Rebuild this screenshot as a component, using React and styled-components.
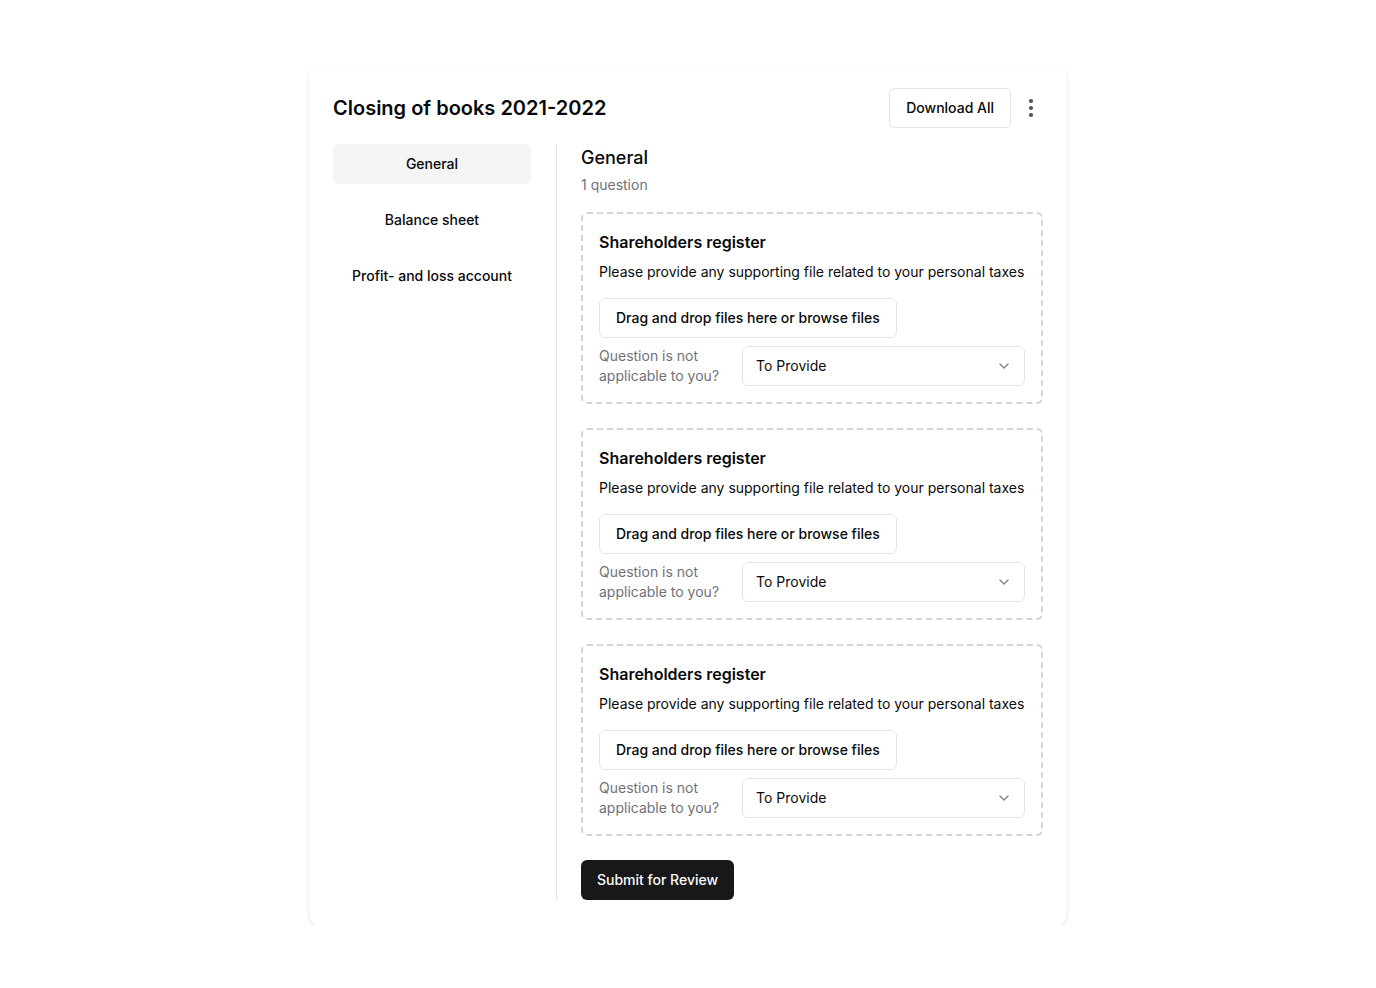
import React from "react";
import styled, { createGlobalStyle } from "styled-components";

const Global = createGlobalStyle`
  * { box-sizing: border-box; }
  html, body { margin: 0; padding: 0; background: #ffffff; }
  body { font-family: Inter, "Noto Sans", sans-serif; color: #09090b; -webkit-font-smoothing: antialiased; }
  button { font-family: inherit; }
`;

const Page = styled.div`
  display: flex;
  justify-content: center;
  padding-top: 67px;
`;

const Card = styled.div`
  width: 758px;
  background: #fff;
  border-radius: 8px;
  box-shadow: 0 1px 3px rgba(0,0,0,0.10), 0 1px 2px rgba(0,0,0,0.06);
  padding: 21px 24px 24px;
  display: flex;
  flex-direction: column;
  gap: 16px;
`;

const Header = styled.div`
  display: flex;
  align-items: center;
  justify-content: space-between;
  height: 40px;
`;

const Title = styled.h1`
  margin: 0;
  font-size: 20px;
  font-weight: 600;
  letter-spacing: 0;
  line-height: 28px;
`;

const Actions = styled.div`
  display: flex;
  align-items: center;
  gap: 8px;
`;

const OutlineButton = styled.button`
  height: 40px;
  padding: 0 16px 1px;
  background: #fff;
  border: 1px solid #e4e4e7;
  border-radius: 6px;
  font-size: 14px;
  font-weight: 500;
  color: #09090b;
  cursor: pointer;
  display: inline-flex;
  align-items: center;
  white-space: nowrap;
`;

const IconButton = styled.button`
  width: 24px;
  height: 40px;
  padding: 0;
  background: transparent;
  border: none;
  display: flex;
  align-items: center;
  justify-content: center;
  color: #52525b;
  cursor: pointer;
`;

const Body = styled.div`
  display: flex;
`;

const Sidebar = styled.nav`
  width: 224px;
  flex-shrink: 0;
  padding-right: 25px;
  border-right: 1px solid #e4e4e7;
  display: flex;
  flex-direction: column;
  gap: 16px;
`;

const Tab = styled.button`
  height: 40px;
  width: 100%;
  border: none;
  border-radius: 6px;
  padding: 0 0 1px;
  background: ${p => (p.$active ? "#f4f4f5" : "transparent")};
  font-size: 14px;
  font-weight: 500;
  color: #09090b;
  cursor: pointer;
`;

const Content = styled.div`
  flex: 1;
  padding-left: 24px;
  display: flex;
  flex-direction: column;
`;

const SectionTitle = styled.h2`
  margin: 0;
  font-size: 18px;
  font-weight: 500;
  line-height: 28px;
`;

const SectionSub = styled.p`
  margin: 3px 0 17px;
  font-size: 14px;
  line-height: 20px;
  color: #71717a;
`;

const Questions = styled.div`
  display: flex;
  flex-direction: column;
  gap: 24px;
`;

const QuestionBox = styled.div`
  border: 2px dashed #d4d4d8;
  border-radius: 6px;
  padding: 16px;
  display: flex;
  flex-direction: column;
`;

const QTitle = styled.h3`
  margin: 0;
  font-size: 16px;
  font-weight: 600;
  line-height: 24px;
`;

const QDesc = styled.p`
  margin: 8px 0 16px;
  font-size: 14px;
  line-height: 20px;
  color: #09090b;
`;

const UploadButton = styled(OutlineButton)`
  align-self: flex-start;
`;

const ApplicableRow = styled.div`
  display: flex;
  align-items: center;
  gap: 15px;
  margin-top: 8px;
`;

const ApplicableLabel = styled.span`
  width: 128px;
  flex-shrink: 0;
  font-size: 14px;
  line-height: 20px;
  color: #71717a;
`;

const Select = styled.div`
  flex: 1;
  height: 40px;
  border: 1px solid #e4e4e7;
  border-radius: 6px;
  padding: 0 12px 1px 13px;
  display: flex;
  align-items: center;
  justify-content: space-between;
  font-size: 14px;
  color: #09090b;
`;

const Chevron = styled.svg`
  opacity: 0.5;
`;

const SubmitButton = styled.button`
  margin-top: 24px;
  align-self: flex-start;
  height: 40px;
  padding: 0 16px 1px;
  background: #18181b;
  color: #fafafa;
  border: none;
  border-radius: 6px;
  font-size: 14px;
  font-weight: 500;
  cursor: pointer;
`;

const tabs = ["General", "Balance sheet", "Profit- and loss account"];

function Question() {
  return (
    <QuestionBox>
      <QTitle>Shareholders register</QTitle>
      <QDesc>Please provide any supporting file related to your personal taxes</QDesc>
      <UploadButton>Drag and drop files here or browse files</UploadButton>
      <ApplicableRow>
        <ApplicableLabel>Question is not applicable to you?</ApplicableLabel>
        <Select>
          <span>To Provide</span>
          <Chevron width="16" height="16" viewBox="0 0 24 24" fill="none" stroke="currentColor" strokeWidth="2" strokeLinecap="round" strokeLinejoin="round">
            <path d="m6 9 6 6 6-6" />
          </Chevron>
        </Select>
      </ApplicableRow>
    </QuestionBox>
  );
}

export default function App() {
  return (
    <>
      <Global />
      <Page>
        <Card>
          <Header>
            <Title>Closing of books 2021-2022</Title>
            <Actions>
              <OutlineButton>Download All</OutlineButton>
              <IconButton aria-label="More">
                <svg width="24" height="24" viewBox="0 0 24 24" fill="none" stroke="currentColor" strokeWidth="2.2" strokeLinecap="round" strokeLinejoin="round">
                  <circle cx="12" cy="12" r="1" />
                  <circle cx="12" cy="5" r="1" />
                  <circle cx="12" cy="19" r="1" />
                </svg>
              </IconButton>
            </Actions>
          </Header>
          <Body>
            <Sidebar>
              {tabs.map((t, i) => (
                <Tab key={t} $active={i === 0}>{t}</Tab>
              ))}
            </Sidebar>
            <Content>
              <SectionTitle>General</SectionTitle>
              <SectionSub>1 question</SectionSub>
              <Questions>
                <Question />
                <Question />
                <Question />
              </Questions>
              <SubmitButton>Submit for Review</SubmitButton>
            </Content>
          </Body>
        </Card>
      </Page>
    </>
  );
}
